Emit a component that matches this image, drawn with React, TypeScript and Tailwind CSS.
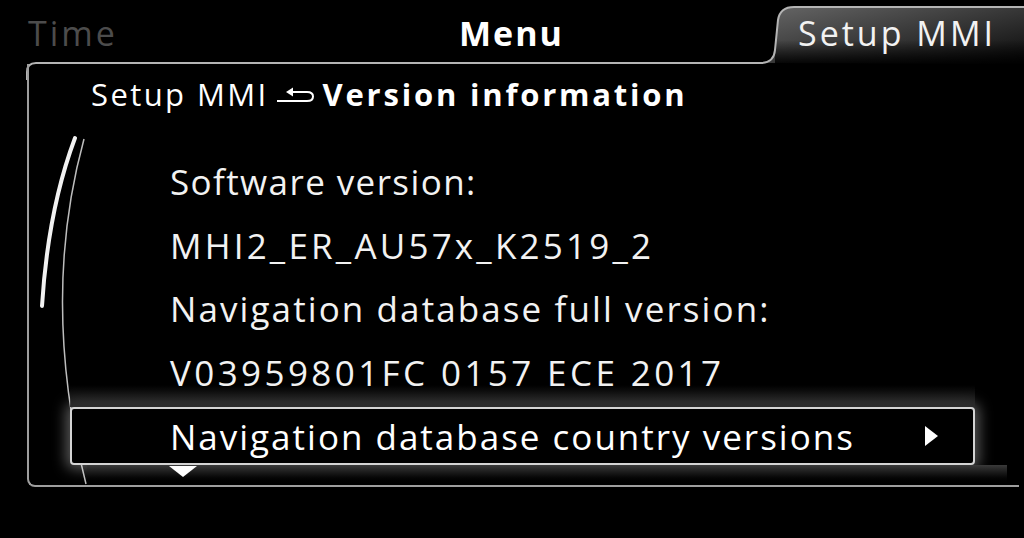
import React from 'react';

const rows = [
  { text: 'Software version:', track: 'tracking-[1.4px]' },
  { text: 'MHI2_ER_AU57x_K2519_2', track: 'tracking-[3.2px]' },
  { text: 'Navigation database full version:', track: 'tracking-[2.1px]' },
  { text: 'V03959801FC 0157 ECE 2017', track: 'tracking-[3.4px]' },
];

export default function App() {
  return (
    <div className="relative w-[1024px] h-[538px] bg-black overflow-hidden text-white font-['Open_Sans','Noto_Sans',sans-serif]">
      {/* frame drawing: tab, outline, scroll arcs */}
      <svg className="absolute inset-0 pointer-events-none" width="1024" height="538" viewBox="0 0 1024 538">
        <defs>
          <linearGradient id="tabFill" x1="0" y1="0" x2="1" y2="1">
            <stop offset="0" stopColor="#666" />
            <stop offset="0.5" stopColor="#383838" />
            <stop offset="1" stopColor="#0a0a0a" />
          </linearGradient>
          <linearGradient id="sepFade" x1="0" y1="0" x2="1" y2="0">
            <stop offset="0" stopColor="#9a9a9a" />
            <stop offset="0.9" stopColor="#9a9a9a" />
            <stop offset="1" stopColor="#9a9a9a" stopOpacity="0" />
          </linearGradient>
          <linearGradient id="tabFade" x1="0" y1="0" x2="0" y2="1">
            <stop offset="0" stopColor="#000" stopOpacity="0" />
            <stop offset="1" stopColor="#000" stopOpacity="1" />
          </linearGradient>
        </defs>
        <path d="M766,63 Q774,62 775,50 L778,20 Q780,7 794,7 L1024,7 L1024,64 Z" fill="url(#tabFill)" />
        <rect x="775" y="40" width="249" height="26" fill="url(#tabFade)" />
        <path
          d="M27,80 L27,72 Q27,63 36,63 L762,63 Q774,62 775,50 L778,20 Q780,7 794,7 L1024,7"
          fill="none"
          stroke="#b4b4b4"
          strokeWidth="2"
        />
        <line x1="28" y1="124.5" x2="1002" y2="124.5" stroke="url(#sepFade)" strokeWidth="2" />
        {/* scroll arcs */}
        <path d="M84,139 Q40,300 86,484" fill="none" stroke="#bdbdbd" strokeWidth="1.5" />
        <path d="M75,138 Q48,210 42,306" fill="none" stroke="#f2f2f2" strokeWidth="4" strokeLinecap="round" />
      </svg>

      {/* top tab row */}
      <div className="relative flex h-[66px] items-center text-[34px] leading-none">
        <div className="w-[459px] pl-[28px] tracking-[3px] text-[#4c4c4c]">Time</div>
        <div className="w-[311px] font-bold tracking-[2px]">Menu</div>
        <div className="ml-[28px] tracking-[3px] text-[#f2f2f2]">Setup MMI</div>
      </div>

      {/* panel */}
      <div className="relative ml-[27px] -mt-[2px] h-[423px] w-[992px] border-l-2 border-b-2 border-[#9e9e9e] rounded-bl-[8px]">
        <div className="flex h-[60px] items-center pl-[62px] text-[31px] leading-none tracking-[2.4px]">
          <span>Setup MMI</span>
          <svg className="mx-[6px] mt-[2px]" width="42" height="20" viewBox="0 0 42 20">
            <path d="M2,16 L32,16" stroke="#fff" strokeWidth="2" />
            <path d="M17,7 L32,7 Q38,7 38,11.5 Q38,16 32,16" fill="none" stroke="#fff" strokeWidth="2" />
            <path d="M11,7 L18,2.5 L18,11.5 Z" fill="#fff" />
          </svg>
          <span className="font-bold tracking-[2.8px]">Version information</span>
        </div>

        <div className="pt-[26px]">
          {rows.map((r) => (
            <div key={r.text} className={`flex h-[63.5px] items-center pl-[141px] text-[35px] leading-none text-[#f2f2f2] ${r.track}`}>
              {r.text}
            </div>
          ))}
        </div>

        <div className="relative mt-[3px] ml-[41px] w-[905px]">
          <div className="pointer-events-none absolute -top-[22px] left-0 right-0 h-[22px] bg-gradient-to-b from-transparent to-[#2a2a2a]" />
          <div className="flex h-[58px] items-center justify-between rounded-[4px] border-2 border-[#d4d4d4] bg-black pl-[98px] pr-[34px] text-[35px] leading-none tracking-[2px] shadow-[0_0_14px_4px_rgba(255,255,255,0.35)]">
            <span>Navigation database country versions</span>
            <svg width="15" height="22" viewBox="0 0 15 22">
              <path d="M1,1 L14,11 L1,21 Z" fill="#fff" />
            </svg>
          </div>
        </div>
        <div className="relative ml-[58px] h-[20px] w-[920px] bg-gradient-to-b from-[#3a3a3a] to-black">
          <svg className="absolute left-[82px] top-[1px]" width="28" height="12" viewBox="0 0 28 12">
            <path d="M0,0 L28,0 L14,11 Z" fill="#fff" />
          </svg>
        </div>
      </div>
    </div>
  );
}
